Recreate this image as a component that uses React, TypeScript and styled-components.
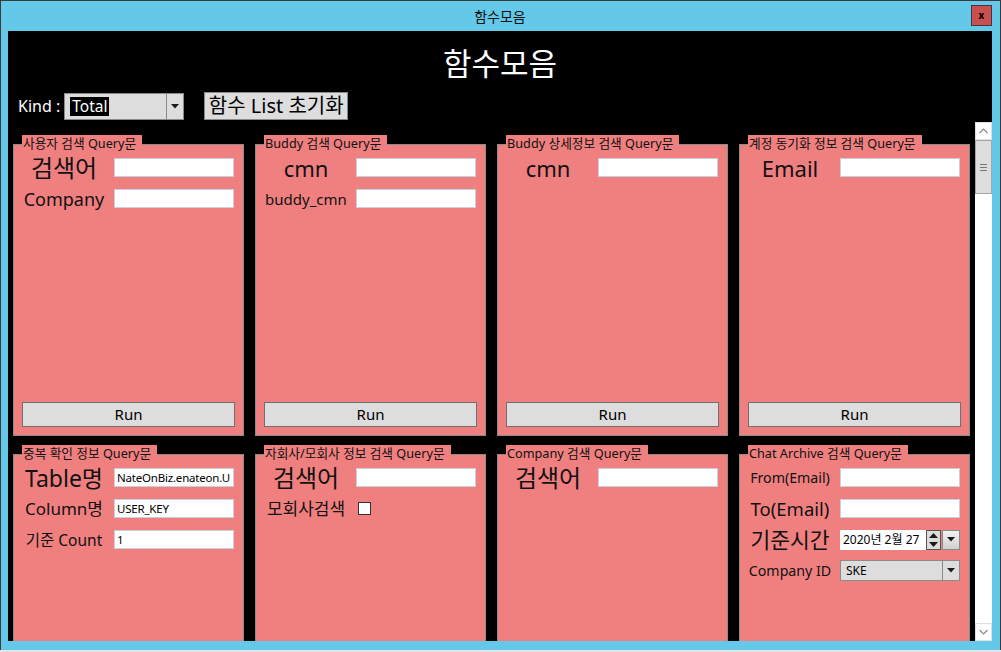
import styled, { createGlobalStyle } from 'styled-components';

const GlobalStyle = createGlobalStyle`
  html, body {
    margin: 0;
    padding: 0;
    background: #e4e4e4;
  }
  body {
    font-family: "Noto Sans", "Noto Sans CJK KR", sans-serif;
  }
`;

type Field = {
  label: string;
  size: number;
  kind?: 'text' | 'check' | 'date' | 'combo';
  value?: string;
};

type Query = {
  title: string;
  fields: Field[];
  run?: boolean;
};

const queries: Query[] = [
  { title: '사용자 검색 Query문', run: true, fields: [{ label: '검색어', size: 24 }, { label: 'Company', size: 18 }] },
  { title: 'Buddy 검색 Query문', run: true, fields: [{ label: 'cmn', size: 22 }, { label: 'buddy_cmn', size: 15 }] },
  { title: 'Buddy 상세정보 검색 Query문', run: true, fields: [{ label: 'cmn', size: 22 }] },
  { title: '계정 동기화 정보 검색 Query문', run: true, fields: [{ label: 'Email', size: 22 }] },
  {
    title: '중복 확인 정보 Query문',
    fields: [
      { label: 'Table명', size: 23, value: 'NateOnBiz.enateon.U' },
      { label: 'Column명', size: 17, value: 'USER_KEY' },
      { label: '기준 Count', size: 15.5, value: '1' },
    ],
  },
  {
    title: '자회사/모회사 정보 검색 Query문',
    fields: [
      { label: '검색어', size: 24 },
      { label: '모회사검색', size: 17, kind: 'check' },
    ],
  },
  { title: 'Company 검색 Query문', fields: [{ label: '검색어', size: 24 }] },
  {
    title: 'Chat Archive 검색 Query문',
    fields: [
      { label: 'From(Email)', size: 14.2 },
      { label: 'To(Email)', size: 18.5 },
      { label: '기준시간', size: 21.5, kind: 'date', value: '2020년 2월 27' },
      { label: 'Company ID', size: 14.2, kind: 'combo', value: 'SKE' },
    ],
  },
];

const DownArrow = () => (
  <svg width="8" height="5" viewBox="0 0 8 5">
    <polygon points="0,0 8,0 4,4.5" fill="#1a1a1a" />
  </svg>
);

const Chevron = ({ up }: { up?: boolean }) => (
  <svg width="9" height="6" viewBox="0 0 9 6">
    <polyline
      points={up ? '0.5,5 4.5,1 8.5,5' : '0.5,1 4.5,5 8.5,1'}
      fill="none"
      stroke="#8a8a8a"
      strokeWidth="1.2"
    />
  </svg>
);

const FieldControl = ({ field }: { field: Field }) => {
  if (field.kind === 'check') return <CheckBox />;
  if (field.kind === 'date')
    return (
      <DatePicker>
        <DateText>{field.value}</DateText>
        <Spin>
          <SpinHalf>
            <svg width="9" height="5" viewBox="0 0 9 5">
              <polygon points="0,5 9,5 4.5,0" fill="#1a1a1a" />
            </svg>
          </SpinHalf>
          <SpinHalf>
            <svg width="9" height="5" viewBox="0 0 9 5">
              <polygon points="0,0 9,0 4.5,5" fill="#1a1a1a" />
            </svg>
          </SpinHalf>
        </Spin>
        <DateDrop>
          <DownArrow />
        </DateDrop>
      </DatePicker>
    );
  if (field.kind === 'combo')
    return (
      <SmallCombo>
        <ComboText>{field.value}</ComboText>
        <ComboArrow>
          <DownArrow />
        </ComboArrow>
      </SmallCombo>
    );
  return <TextBox readOnly defaultValue={field.value ?? ''} />;
};

const App = () => {
  return (
    <>
      <GlobalStyle />
      <Window>
        <TitleBar>
          <span />
          <TitleText>함수모음</TitleText>
          <CloseButton>x</CloseButton>
        </TitleBar>
        <Content>
          <Heading>함수모음</Heading>
          <KindRow>
            <KindLabel>Kind :</KindLabel>
            <KindCombo>
              <Selected>Total</Selected>
              <ComboArrow>
                <DownArrow />
              </ComboArrow>
            </KindCombo>
            <ResetButton>함수 List 초기화</ResetButton>
          </KindRow>
          <ScrollArea>
            <CardGrid>
              {queries.map((q) => (
                <GroupBox key={q.title}>
                  <GroupHeader>{q.title}</GroupHeader>
                  {q.fields.map((f) => (
                    <FieldRow key={f.label}>
                      <FieldLabel size={f.size}>{f.label}</FieldLabel>
                      <FieldControl field={f} />
                    </FieldRow>
                  ))}
                  {q.run && <RunButton>Run</RunButton>}
                </GroupBox>
              ))}
            </CardGrid>
            <ScrollBar>
              <ScrollButton>
                <Chevron up />
              </ScrollButton>
              <Thumb>
                <Grip />
                <Grip />
                <Grip />
              </Thumb>
              <Track />
              <ScrollButton>
                <Chevron />
              </ScrollButton>
            </ScrollBar>
          </ScrollArea>
        </Content>
      </Window>
    </>
  );
};

const Window = styled.div`
  width: 1001px;
  height: 650px;
  box-sizing: border-box;
  background: #64c8e8;
  border: 1px solid #3a3a3a;
  border-bottom: none;
  padding: 0 8px 9px 7px;
  display: flex;
  flex-direction: column;
`;
const TitleBar = styled.div`
  height: 30px;
  display: grid;
  grid-template-columns: 1fr auto 1fr;
  align-items: center;
`;
const TitleText = styled.div`
  font-family: "Noto Sans CJK KR", sans-serif;
  font-size: 14px;
  color: #111;
  line-height: 30px;
`;
const CloseButton = styled.div`
  justify-self: end;
  width: 21px;
  height: 21px;
  box-sizing: border-box;
  background: #c75050;
  border: 1px solid #4c3434;
  font-size: 10px;
  font-weight: 700;
  line-height: 18px;
  text-align: center;
  color: #000;
  margin-top: -2px;
`;
const Content = styled.div`
  flex: 1;
  min-height: 0;
  background: #000;
  display: flex;
  flex-direction: column;
  overflow: hidden;
`;
const Heading = styled.div`
  padding-top: 8px;
  line-height: 46px;
  font-family: "Noto Sans CJK KR", sans-serif;
  font-size: 31px;
  color: #fff;
  text-align: center;
`;
const KindRow = styled.div`
  margin-top: 7px;
  height: 28px;
  padding-left: 10px;
  display: flex;
  align-items: flex-end;
`;
const KindLabel = styled.span`
  color: #fff;
  font-size: 16px;
  line-height: 27px;
  margin-right: 4px;
`;
const KindCombo = styled.div`
  width: 120px;
  height: 27px;
  box-sizing: border-box;
  background: #dddddd;
  border: 1px solid #8a8a8a;
  display: flex;
  align-items: center;
`;
const Selected = styled.span`
  margin-left: 5px;
  padding: 0 2px;
  background: #000;
  color: #fff;
  font-size: 15.5px;
  line-height: 19px;
`;
const ComboArrow = styled.div`
  margin-left: auto;
  width: 16px;
  height: 100%;
  border-left: 1px solid #8a8a8a;
  display: flex;
  align-items: center;
  justify-content: center;
`;
const ResetButton = styled.div`
  margin-left: 20px;
  width: 144px;
  height: 28px;
  box-sizing: border-box;
  background: #dddddd;
  border: 1px solid #8a8a8a;
  font-size: 20px;
  line-height: 25px;
  text-align: center;
  color: #000;
  white-space: nowrap;
  overflow: hidden;
`;
const ScrollArea = styled.div`
  flex: 1;
  min-height: 0;
  margin-top: 2px;
  display: flex;
`;
const CardGrid = styled.div`
  flex: 1;
  overflow: hidden;
  display: grid;
  grid-template-columns: repeat(4, 1fr);
  column-gap: 11px;
  row-gap: 18px;
  align-content: start;
  padding: 22px 5px 0;
`;
const GroupBox = styled.div`
  position: relative;
  height: 292px;
  box-sizing: border-box;
  background: #f08080;
  border: 1px solid #8c8c8c;
  padding-top: 7px;
  display: flex;
  flex-direction: column;
`;
const GroupHeader = styled.div`
  position: absolute;
  top: -10px;
  left: 8px;
  background: #f08080;
  padding: 0 6px 0 1px;
  font-size: 12.7px;
  line-height: 16px;
  color: #111;
  white-space: nowrap;
`;
const FieldRow = styled.div`
  height: 31px;
  display: grid;
  grid-template-columns: 100px 120px;
  align-items: center;
`;
const FieldLabel = styled.span<{ size: number }>`
  text-align: center;
  font-size: ${({ size }) => size}px;
  line-height: 30px;
  color: #111;
  white-space: nowrap;
`;
const TextBox = styled.input`
  width: 120px;
  height: 19px;
  box-sizing: border-box;
  border: 1px solid #c8d0de;
  background: #fff;
  padding: 0 2px;
  font-family: "Noto Sans", sans-serif;
  font-size: 11.5px;
  letter-spacing: -0.2px;
  color: #000;
  outline: none;
`;
const CheckBox = styled.span`
  width: 13px;
  height: 13px;
  box-sizing: border-box;
  margin-left: 2px;
  background: #fff;
  border: 1px solid #333;
`;
const DatePicker = styled.div`
  width: 120px;
  height: 20px;
  display: flex;
`;
const DateText = styled.div`
  flex: 1;
  background: #fff;
  font-size: 12px;
  line-height: 20px;
  padding-left: 3px;
  white-space: nowrap;
  overflow: hidden;
  color: #000;
`;
const Spin = styled.div`
  width: 15px;
  box-sizing: border-box;
  border: 1px solid #555;
  background: #dcdcdc;
  display: flex;
  flex-direction: column;
`;
const SpinHalf = styled.div`
  flex: 1;
  display: flex;
  align-items: center;
  justify-content: center;
`;
const DateDrop = styled.div`
  width: 18px;
  margin-left: 1px;
  box-sizing: border-box;
  border: 1px solid #8a8a8a;
  background: linear-gradient(#f2f2f2, #d0d0d0);
  display: flex;
  align-items: center;
  justify-content: center;
`;
const SmallCombo = styled.div`
  width: 120px;
  height: 21px;
  box-sizing: border-box;
  background: #dddddd;
  border: 1px solid #8a8a8a;
  display: flex;
  align-items: center;
`;
const ComboText = styled.span`
  padding-left: 5px;
  font-size: 12px;
  color: #000;
`;
const RunButton = styled.div`
  margin: auto 8px 8px 8px;
  height: 25px;
  box-sizing: border-box;
  background: #dddddd;
  border: 1px solid #707070;
  font-size: 15px;
  line-height: 23px;
  text-align: center;
  color: #000;
`;
const ScrollBar = styled.div`
  width: 17px;
  background: #fff;
  display: flex;
  flex-direction: column;
`;
const ScrollButton = styled.div`
  height: 16px;
  display: flex;
  align-items: center;
  justify-content: center;
  border: 1px solid #e0e0e0;
`;
const Thumb = styled.div`
  height: 54px;
  box-sizing: border-box;
  background: #dddddd;
  border: 1px solid #a6a6a6;
  display: flex;
  flex-direction: column;
  align-items: center;
  justify-content: center;
  gap: 2px;
`;
const Grip = styled.span`
  width: 7px;
  height: 1px;
  background: #777;
`;
const Track = styled.div`
  flex: 1;
`;

export default App;
